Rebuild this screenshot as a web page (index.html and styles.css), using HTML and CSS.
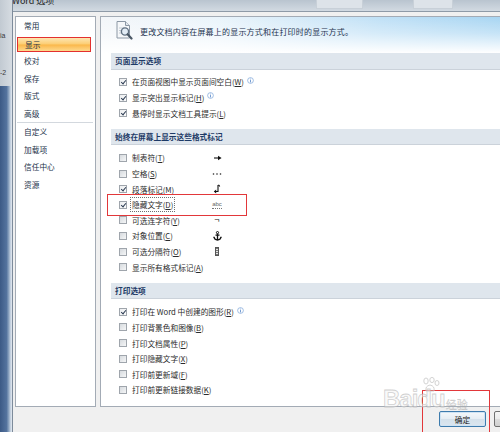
FILE: index.html
```html
<!DOCTYPE html>
<html lang="zh-CN">
<head>
<meta charset="utf-8">
<title>Word 选项</title>
<link rel="stylesheet" href="styles.css">
</head>
<body>
<div class="screen">
  <div class="desktop">
    <div class="desk-top"><span>ia</span><span>-2</span></div>
    <div class="desk-bar"></div>
  </div>
  <div class="dialog">
    <div class="titlebar">
      <span class="title">Word 选项</span>
      <span class="glass g1"></span>
      <span class="glass g2"></span>
    </div>
    <div class="dbody">
      <div class="panes">
        <ul class="nav">
          <li>常用</li>
          <li class="sel">显示</li>
          <li>校对</li>
          <li>保存</li>
          <li>版式</li>
          <li>高级</li>
          <li class="sep"></li>
          <li>自定义</li>
          <li>加载项</li>
          <li>信任中心</li>
          <li>资源</li>
        </ul>
        <div class="content">
          <div class="banner">
            <svg class="banner-icon" width="18" height="20" viewBox="0 0 18 20">
              <path d="M2 1.5H10.5L14.5 5.5V18H2Z" fill="#f5f7f9" stroke="#8c98a5" stroke-width="1"/>
              <path d="M10.5 1.5V5.5H14.5" fill="#e3e8ed" stroke="#8c98a5" stroke-width="1"/>
              <path d="M4 8H9M4 10.5H7M4 13H7" stroke="#c3cbd3" stroke-width="1"/>
              <circle cx="10" cy="11.5" r="3.6" fill="#e2ecf5" stroke="#5f6f80" stroke-width="1.4"/>
              <path d="M12.6 14.2L16.5 18.5" stroke="#4a5866" stroke-width="2.2" stroke-linecap="round"/>
            </svg>
            <span class="banner-text">更改文档内容在屏幕上的显示方式和在打印时的显示方式。</span>
          </div>

          <div class="sec-head">页面显示选项</div>
          <div class="group">
            <div class="row"><span class="cb on"></span><span>在页面视图中显示页面间空白(<u>W</u>)</span><svg class="info" width="7" height="7" viewBox="0 0 8 8"><circle cx="4" cy="4" r="3.3" fill="#fff" stroke="#7aa4d8" stroke-width=".8"/><path d="M4 3.5V6.2" stroke="#4d80c4" stroke-width=".9"/><circle cx="4" cy="2.2" r=".55" fill="#4d80c4"/></svg></div>
            <div class="row"><span class="cb on"></span><span>显示突出显示标记(<u>H</u>)</span><svg class="info" width="7" height="7" viewBox="0 0 8 8"><circle cx="4" cy="4" r="3.3" fill="#fff" stroke="#7aa4d8" stroke-width=".8"/><path d="M4 3.5V6.2" stroke="#4d80c4" stroke-width=".9"/><circle cx="4" cy="2.2" r=".55" fill="#4d80c4"/></svg></div>
            <div class="row"><span class="cb on"></span><span>悬停时显示文档工具提示(<u>L</u>)</span></div>
          </div>

          <div class="sec-head">始终在屏幕上显示这些格式标记</div>
          <div class="group marks">
            <div class="row"><span class="cb"></span><span class="lbl">制表符(<u>T</u>)</span><span class="mark"><svg width="9" height="6" viewBox="0 0 9 6"><path d="M1 3H6" stroke="#111" stroke-width="1.1"/><path d="M5 0.8L8.6 3L5 5.2Z" fill="#111"/></svg></span></div>
            <div class="row"><span class="cb"></span><span class="lbl">空格(<u>S</u>)</span><span class="mark"><svg width="10" height="4" viewBox="0 0 10 4"><circle cx="1.5" cy="2" r=".8" fill="#222"/><circle cx="5" cy="2" r=".8" fill="#222"/><circle cx="8.5" cy="2" r=".8" fill="#222"/></svg></span></div>
            <div class="row"><span class="cb on"></span><span class="lbl">段落标记(<u>M</u>)</span><span class="mark"><svg width="8" height="10" viewBox="0 0 8 10"><path d="M5 1.2Q7 0.8 6.6 2.6" fill="none" stroke="#111" stroke-width="1"/><path d="M5 1V7.5H2" fill="none" stroke="#111" stroke-width="1.1"/><path d="M3.2 5.6L0.8 7.5L3.2 9.4Z" fill="#111"/></svg></span></div>
            <div class="row hl"><span class="cb on"></span><span class="lbl"><span class="focus">隐藏文字(<u>D</u>)</span></span><span class="mark"><span class="abc">abc</span></span></div>
            <div class="row"><span class="cb"></span><span class="lbl">可选连字符(<u>Y</u>)</span><span class="mark"><span class="hyph">¬</span></span></div>
            <div class="row"><span class="cb"></span><span class="lbl">对象位置(<u>C</u>)</span><span class="mark"><svg width="9" height="10" viewBox="0 0 9 10"><circle cx="4.5" cy="1.6" r="1.1" fill="none" stroke="#111" stroke-width="1"/><path d="M4.5 2.7V9M2.5 4.2H6.5" stroke="#111" stroke-width="1.3"/><path d="M1 6Q1.5 9 4.5 9Q7.5 9 8 6" fill="none" stroke="#111" stroke-width="1.3"/><path d="M0.2 6.6L1 5.2L1.9 6.6Z M7.1 6.6L8 5.2L8.8 6.6Z" fill="#111"/></svg></span></div>
            <div class="row"><span class="cb"></span><span class="lbl">可选分隔符(<u>O</u>)</span><span class="mark"><span class="brk"></span></span></div>
            <div class="row"><span class="cb"></span><span class="lbl">显示所有格式标记(<u>A</u>)</span></div>
          </div>

          <div class="sec-head">打印选项</div>
          <div class="group">
            <div class="row"><span class="cb on"></span><span>打印在 Word 中创建的图形(<u>R</u>)</span><svg class="info" width="7" height="7" viewBox="0 0 8 8"><circle cx="4" cy="4" r="3.3" fill="#fff" stroke="#7aa4d8" stroke-width=".8"/><path d="M4 3.5V6.2" stroke="#4d80c4" stroke-width=".9"/><circle cx="4" cy="2.2" r=".55" fill="#4d80c4"/></svg></div>
            <div class="row"><span class="cb"></span><span>打印背景色和图像(<u>B</u>)</span></div>
            <div class="row"><span class="cb"></span><span>打印文档属性(<u>P</u>)</span></div>
            <div class="row"><span class="cb"></span><span>打印隐藏文字(<u>X</u>)</span></div>
            <div class="row"><span class="cb"></span><span>打印前更新域(<u>F</u>)</span></div>
            <div class="row"><span class="cb"></span><span>打印前更新链接数据(<u>K</u>)</span></div>
          </div>
        </div>
      </div>
      <div class="buttons">
        <button class="btn ok">确定<span class="annot"></span></button>
        <button class="btn">取消</button>
      </div>
    </div>
  </div>
  <div class="watermark">
    <span class="wm-bai">Bai</span>
    <span class="wm-du">
      <svg class="paw" width="20" height="16" viewBox="0 0 20 16"><ellipse cx="5" cy="4" rx="2.2" ry="3" fill="none" stroke="#c9c9c9"/><ellipse cx="11" cy="3" rx="2.2" ry="2.6" fill="none" stroke="#c9c9c9"/><ellipse cx="16" cy="6" rx="2" ry="2.5" fill="none" stroke="#c9c9c9"/><path d="M5 14Q4 9 9 8Q14 9 13 14Z" fill="none" stroke="#c9c9c9"/></svg>
      <span>du</span>
    </span>
    <span class="wm-jy">经验</span>
  </div>
</div>
</body>
</html>
```

FILE: styles.css
```css
* { box-sizing: border-box; margin: 0; padding: 0; }
html, body { width: 500px; height: 432px; overflow: hidden; background: #f0f0f0; }
body {
  font-family: "Noto Sans CJK SC", "Noto Sans", sans-serif;
  font-size: 7.7px;
  color: #2b2b2b;
}
u { text-decoration: underline; text-underline-offset: 1px; }

.screen { position: relative; display: flex; width: 500px; height: 432px; overflow: hidden; }

/* desktop behind the dialog */
.desktop { flex: none; width: 12px; display: flex; flex-direction: column; }
.desk-top {
  height: 86px;
  background: linear-gradient(to right, #c2cad2, #d6dce2);
  font: 7px "Liberation Sans", sans-serif;
  color: #3a3a3a;
  display: flex; flex-direction: column;
  padding-top: 32px; gap: 30px;
  overflow: hidden;
}
.desk-bar {
  flex: 1;
  background: linear-gradient(to right, #3c5a86 0, #54739e 55%, #8aa2bf 72%, #c6d2e0 88%, #e4eaf1 100%);
}

/* dialog */
.dialog {
  flex: none; width: 560px;
  display: flex; flex-direction: column;
  border-left: 1px solid #7d8b9b;
  background: #f0f0f0;
}
.titlebar {
  height: 12px; flex: none;
  display: flex; align-items: flex-start;
  border-bottom: 1px solid #8e9aa7;
  background: linear-gradient(#b9c4cf, #d2dae2);
  overflow: hidden;
}
.title {
  font-size: 9px; line-height: 9px;
  margin-top: -4px; margin-left: -1px;
  color: #1d1d1d; white-space: nowrap;
}
.glass { height: 9px; border: 1px solid #c8d0d8; border-top: none; background: #dde3e9; }
.g1 { margin-left: 262px; width: 47px; }
.g2 { margin-left: 50px; width: 40px; }

.dbody { flex: 1; display: flex; flex-direction: column; padding: 4px 3px 0 2px; }
.panes { display: flex; gap: 4px; height: 391px; flex: none; }

/* left navigation */
.nav {
  list-style: none; flex: none; width: 81px;
  background: #fff; border: 1px solid #a3abb5;
}
.nav li {
  height: 17.5px; display: flex; align-items: center;
  padding-left: 8px; color: #22324a;
}
.nav li.sel {
  height: 15.5px; margin: 2px 4px 0 1px; padding-left: 7px;
  border: 1.5px solid #e3302f;
  background: linear-gradient(to bottom, #fde6b2 0%, #fccd72 48%, #fbb749 52%, #fdd98d 100%);
}
.nav li.sep { height: 1px; margin: 0 2px 0 1px; padding: 0; background: #d3d8de; }

/* right content */
.content {
  flex: none; width: 469px;
  background: #fff; border: 1px solid #a3abb5;
  overflow: hidden;
}
.banner {
  height: 36px; display: flex; align-items: flex-start;
  padding: 3px 0 0 14px; gap: 7px;
  background:
    linear-gradient(to bottom, rgba(255,255,255,0) 0%, rgba(255,255,255,.35) 45%, #fff 100%),
    linear-gradient(to right, #f3f6f9 0%, #eaf4fb 25%, #bfe0f6 60%, #9bcff0 100%);
}
.banner-icon { flex: none; }
.banner-text {
  margin-top: 7px; line-height: 10px;
  font-size: 8px; letter-spacing: .2px; color: #1f3451; white-space: nowrap;
}

.sec-head {
  height: 16.5px; margin-left: 10px;
  display: flex; align-items: center; padding-left: 4px;
  background: #dfe6ed; border-bottom: 1px solid #cbd2da;
  font-weight: bold; color: #1d3a66; white-space: nowrap;
}
.group { padding: 4.7px 0 8px 18px; }
.row {
  position: relative;
  height: 15.6px; display: flex; align-items: center; white-space: nowrap;
}
.cb {
  flex: none; position: relative;
  width: 8px; height: 8px; margin-right: 5px;
  border: 1px solid #9fa5ac;
  background: linear-gradient(135deg, #d6dade, #f5f6f7);
}
.cb.on { background: linear-gradient(135deg, #eceef0, #fbfbfb); }
.cb.on::after {
  content: ""; position: absolute;
  left: 1.8px; top: 0;
  width: 2px; height: 4.2px;
  border: solid #2a3a52; border-width: 0 1.3px 1.3px 0;
  transform: rotate(40deg);
}
.info { flex: none; margin-left: 3px; align-self: flex-start; margin-top: 2.5px; }

.marks .lbl { width: 80px; flex: none; display: flex; align-items: center; }
.mark { width: 10px; flex: none; display: flex; justify-content: center; align-items: center; }
.focus {
  display: inline-flex; align-items: center;
  height: 15px; margin-left: -2px; padding: 0 1px;
  border: 1px dotted #707070;
}
.row.hl::after {
  content: ""; position: absolute;
  left: -12px; top: -3px; width: 138px; height: 20px;
  border: 1.5px solid #e2373a;
}
.abc {
  font: 6px "Liberation Sans", sans-serif; color: #666;
  border-bottom: 1px dotted #777; line-height: 6px; padding-bottom: 1px;
}
.hyph { font: 9px "Liberation Sans", sans-serif; color: #111; line-height: 9px; }
.brk {
  width: 4px; height: 9px; border: 1px solid #555;
  background: repeating-linear-gradient(to bottom, #777 0 1px, #e6e6e6 1px 2px);
}

/* bottom buttons */
.buttons { flex: 1; display: flex; justify-content: flex-end; gap: 8px; padding: 4px 28px 0 0; }
.btn {
  position: relative;
  width: 47px; height: 16px;
  font: 7.7px "Noto Sans CJK SC", sans-serif; color: #222;
  border: 1px solid #707070; border-radius: 2px;
  background: linear-gradient(#f4f4f4, #ebebeb 50%, #dddddd 51%, #d0d0d0);
}
.btn.ok {
  border-color: #3d7bad;
  background: linear-gradient(#f4f8fb, #e5edf3 50%, #d4e1eb 51%, #dbe6ef);
  box-shadow: inset 0 0 0 1px #cfe3f3;
}
.annot {
  position: absolute; left: -18px; top: -22px;
  width: 68px; height: 50px;
  border: 1.5px solid #e2373a;
}

/* watermark */
.watermark {
  position: absolute; left: 383px; top: 377px;
  display: flex; align-items: flex-end;
  pointer-events: none;
}
.wm-bai, .wm-du span {
  font: bold 24px/24px "Liberation Sans", sans-serif;
  color: rgba(245,245,245,.55);
  -webkit-text-stroke: .8px rgba(170,170,170,.55);
  letter-spacing: -1px;
}
.wm-du { display: flex; flex-direction: column; align-items: center; }
.paw { margin-bottom: -6px; opacity: .8; }
.wm-jy {
  font-size: 11px; line-height: 14px; margin-left: 1px;
  color: rgba(200,200,200,.45);
  -webkit-text-stroke: .4px rgba(160,160,160,.45);
}
```
